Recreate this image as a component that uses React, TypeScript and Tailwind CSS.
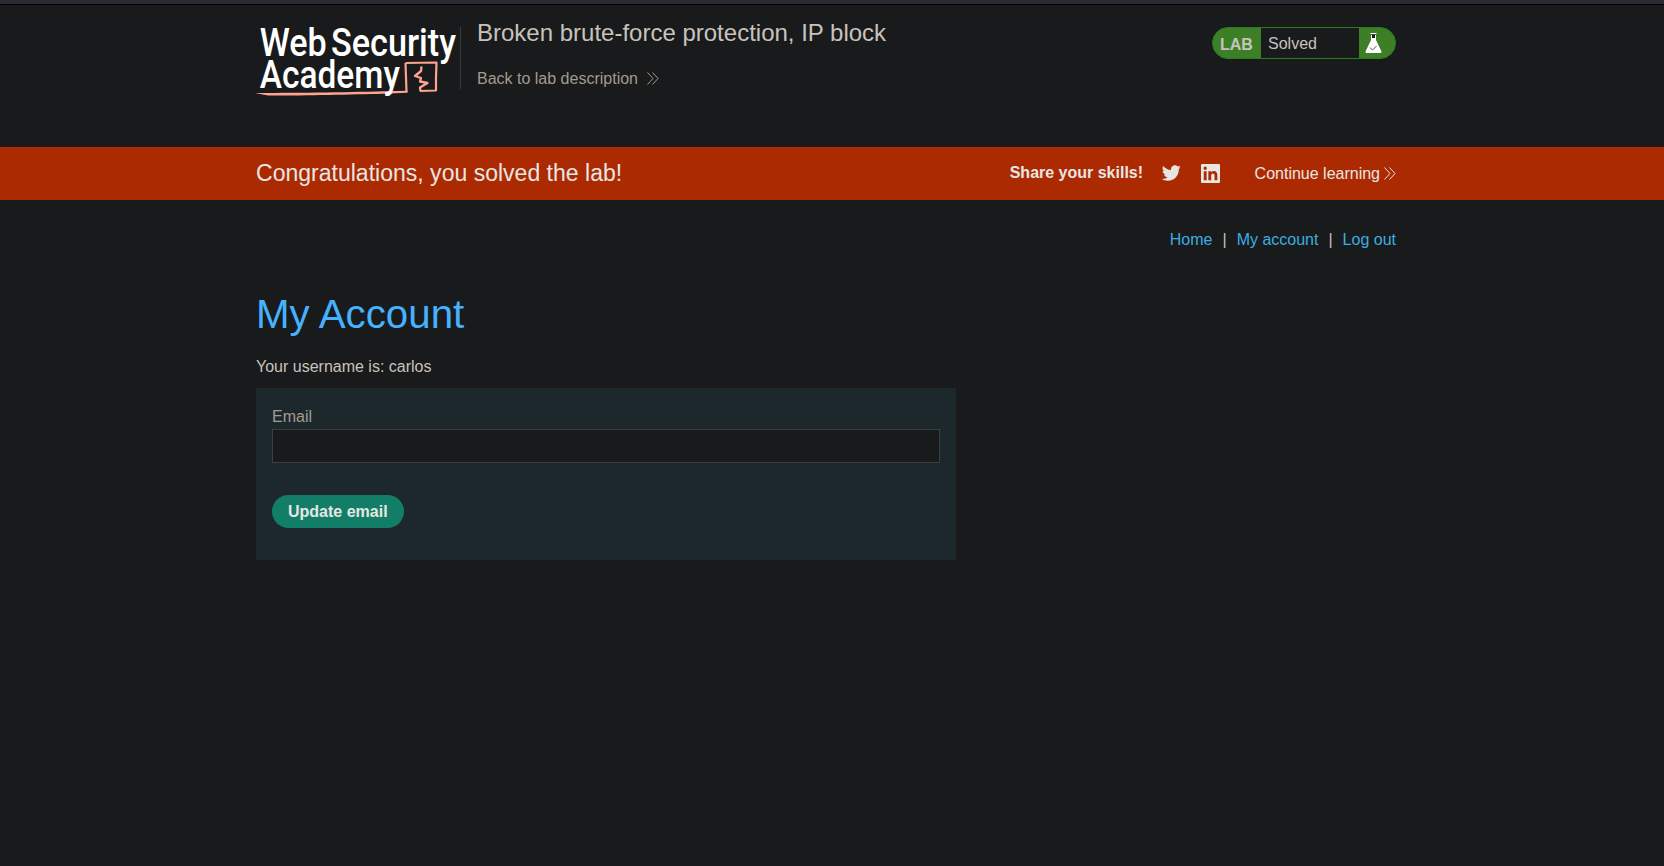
import React from "react";

function DoubleChevron({ className }: { className: string }) {
  return (
    <svg width="12" height="13" viewBox="0 0 12 13" fill="none" stroke="currentColor" strokeWidth="1" className={className}>
      <path d="M0.5 0.5 6 6.5 0.5 12.5M5.5 0.5 11 6.5 5.5 12.5" />
    </svg>
  );
}

function Logo() {
  return (
    <svg width="204" height="72" viewBox="0 0 204 72" overflow="visible" className="block shrink-0">
      <g fill="none" stroke="#ffa28f" strokeLinejoin="round">
        <path d="M149.500 36 180.500 35.500 180 50 180 63.500 164 64M149.500 36 150.500 65" strokeWidth="2.200" />
        <path d="M165.500 39.500 165 44 159 49 165 51 164 54.500 171.500 56 164 60.500 164.500 64" strokeWidth="2.300" />
      </g>
      <path d="M-1 66C30 66 90 65.500 127 64.300L151.500 63.700V65.700L127 66.700C95 67.500 45 68.600 12 68.500Z" fill="#ffa28f" />
      <g fill="#fff" fontFamily="Roboto, sans-serif" fontWeight="500" fontSize="38">
        <text x="3.800" y="28.500" textLength="67" lengthAdjust="spacingAndGlyphs">Web</text>
        <text x="75" y="28.500" textLength="125" lengthAdjust="spacingAndGlyphs">Security</text>
        <text x="3.800" y="61.300" textLength="140" lengthAdjust="spacingAndGlyphs">Academy</text>
      </g>
    </svg>
  );
}

function Flask() {
  return (
    <svg width="17" height="21" viewBox="0 0 17 21" className="block">
      <path d="M6 2h5v5l5.500 11.500Q16.500 20 15.500 20h-14Q0.500 20 0.500 18.500L6 7z" fill="#fff" />
      <path d="M7 1.500h3V5H7z" fill="#181a1b" />
      <path d="M5.500 0.500h6" stroke="#fff" />
      <path d="m5 14.500 2.500 2.500 4-4" fill="none" stroke="#555" />
    </svg>
  );
}

export default function App() {
  return (
    <div className="h-[866px] bg-[#181a1b] font-['Liberation_Sans',Arial,sans-serif] text-base text-[#c8c3bc]">
      <div className="h-[5px] border-b border-black bg-[#2b2a33]" />
      <div className="pr-3">
        <header className="mx-auto flex h-[142px] w-[1140px] items-start pt-[22px]">
          <Logo />
          <div className="h-[62px] w-px bg-[#363b3d]" />
          <div className="-mt-2 ml-4 flex-1">
            <h2 className="text-2xl leading-7">Broken brute-force protection, IP block</h2>
            <a className="mt-[23px] flex items-center leading-[18px] text-[#a39b8f]">
              Back to lab description
              <DoubleChevron className="-mt-0.5 ml-[9px]" />
            </a>
          </div>
          <div className="flex h-8 w-[184px] overflow-hidden rounded-full border border-[#2c7a22] bg-[#3d7f27]">
            <span className="flex w-12 items-center pt-[3px] pl-[7px] font-bold">LAB</span>
            <span className="flex w-[98px] items-center bg-[#181a1b] pt-px pl-[7px]">Solved</span>
            <span className="flex items-center pl-[6px]">
              <Flask />
            </span>
          </div>
        </header>
      </div>

      <section className="h-[53px] bg-[#ab2a01] pr-3 text-[#e8e6e3]">
        <div className="mx-auto flex h-full w-[1140px] items-center">
          <h4 className="-mt-0.5 flex-1 text-[23.040px] leading-7">Congratulations, you solved the lab!</h4>
          <span className="-mt-0.5 font-bold">Share your skills!</span>
          <svg width="20" height="20" viewBox="0 0 24 24" fill="currentColor" className="-mt-px ml-[18px]">
            <path d="M23.643 4.937c-.835.37-1.732.62-2.675.733.962-.576 1.700-1.490 2.048-2.578-.900.534-1.897.922-2.958 1.130-.850-.904-2.060-1.470-3.400-1.470-2.572 0-4.658 2.086-4.658 4.660 0 .364.042.718.120 1.060-3.873-.195-7.304-2.050-9.602-4.868-.400.690-.630 1.490-.630 2.342 0 1.616.823 3.043 2.072 3.878-.764-.025-1.482-.234-2.110-.583v.060c0 2.257 1.605 4.140 3.737 4.568-.392.106-.803.162-1.227.162-.300 0-.593-.028-.877-.082.593 1.850 2.313 3.198 4.352 3.234-1.595 1.250-3.604 1.995-5.786 1.995-.376 0-.747-.022-1.112-.065 2.062 1.323 4.510 2.093 7.140 2.093 8.570 0 13.255-7.098 13.255-13.254 0-.200-.005-.402-.014-.602.910-.658 1.700-1.477 2.323-2.410z" />
          </svg>
          <svg width="19" height="19" viewBox="0 0 24 24" fill="currentColor" className="ml-5">
            <path fillRule="evenodd" d="M1.500 0h21A1.500 1.500 0 0 1 24 1.500v21a1.500 1.500 0 0 1-1.500 1.500h-21A1.500 1.500 0 0 1 0 22.500v-21A1.500 1.500 0 0 1 1.500 0zM3.500 9v11.500h3.600V9zM5.300 3.300a2.100 2.100 0 1 0 0 4.200 2.100 2.100 0 0 0 0-4.200zM9.300 9v11.500h3.600v-5.700c0-3.800 4.200-3.500 4.200 0v5.700h3.500v-6.600c0-5.800-5.700-6-7.700-3.200V9z" />
          </svg>
          <a className="ml-[34.500px] flex items-center leading-[18px]">
            Continue learning
            <DoubleChevron className="ml-1" />
          </a>
        </div>
      </section>

      <div className="pr-3">
        <main className="mx-auto w-[1140px] pt-[31px]">
          <nav className="flex justify-end leading-[18px] text-[#3baee2]">
            <a>Home</a>
            <span className="mx-[10px] text-[#c8c3bc]">|</span>
            <a>My account</a>
            <span className="mx-[10px] text-[#c8c3bc]">|</span>
            <a>Log out</a>
          </nav>
          <h1 className="mt-[43px] text-[40.3px] leading-[46px] text-[#45b1ff]">My Account</h1>
          <p className="mt-5 leading-[18px]">Your username is: carlos</p>
          <form className="mt-[12px] h-[172px] w-[700px] bg-[#1d282c] px-4 pt-5">
            <label className="block leading-[18px] text-[#a39b8f]">Email</label>
            <input className="mt-[3px] block h-[34px] w-full border border-[#3a3f41] bg-[#181a1b] px-2 outline-none" />
            <button type="button" className="mt-8 block h-[33px] rounded-full bg-[#127e67] px-4 font-bold text-[#e8e6e3]">
              Update email
            </button>
          </form>
        </main>
      </div>
    </div>
  );
}
